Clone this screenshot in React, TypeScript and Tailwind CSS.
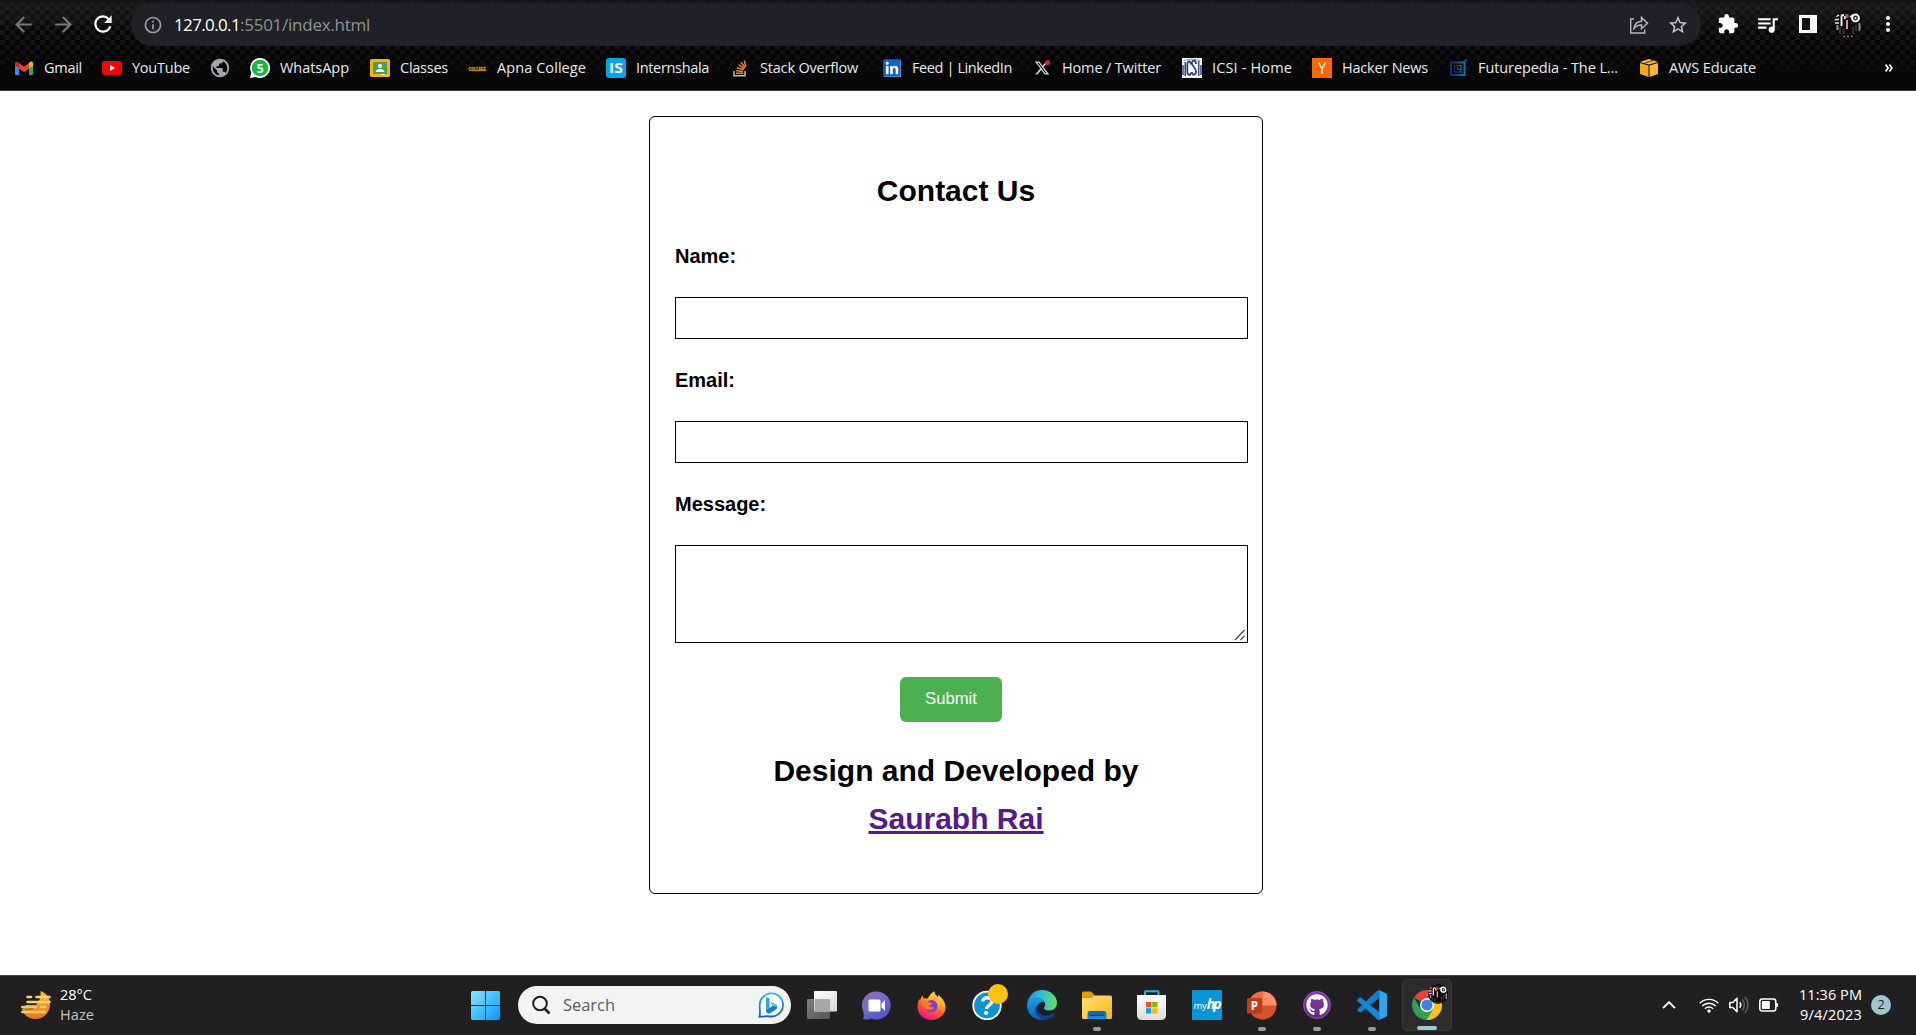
import React, { useLayoutEffect, useRef, useState } from "react";
import {
  MdArrowBack, MdArrowForward, MdRefresh, MdInfoOutline, MdStarBorder,
  MdExtension, MdQueueMusic, MdMoreVert, MdPublic,
} from "react-icons/md";
import { FaGithub, FaLinkedin } from "react-icons/fa";
import { FaXTwitter } from "react-icons/fa6";

/* A one-line label whose tracking adapts so that it fills a given width. */
function Fit({ width, className = "", children }: { width: number; className?: string; children: string }) {
  const ref = useRef<HTMLSpanElement>(null);
  const [tracking, setTracking] = useState(0);
  useLayoutEffect(() => {
    if (ref.current) {
      const natural = ref.current.getBoundingClientRect().width;
      setTracking((width - natural) / children.length);
    }
  }, [width, children]);
  return (
    <span ref={ref} className={`inline-block whitespace-pre ${className}`} style={{ letterSpacing: tracking }}>
      {children}
    </span>
  );
}

/* ---------- bookmark icons (20 x 20) ---------- */
const Gmail = () => (
  <svg viewBox="0 0 20 20" className="size-5">
    <path d="M1 4.5V16a1 1 0 0 0 1 1h3V8z" fill="#4285f4" />
    <path d="M19 4.5V16a1 1 0 0 1-1 1h-3V8z" fill="#34a853" />
    <path d="M15 5l1.2-1C17.500 3 19 3.900 19 5.500V7.500l-4 3z" fill="#fbbc04" />
    <path d="M5 10.500V5l5 3.800L15 5v5.500L10 14.200z" fill="#ea4335" />
    <path d="M1 7.500V5.500C1 3.900 2.500 3 3.800 4L5 5v5.500z" fill="#c5221f" />
  </svg>
);
const YouTube = () => (
  <svg viewBox="0 0 20 20" className="size-5">
    <rect x="0" y="3" width="20" height="14" rx="3" fill="#f00" />
    <path d="M8 7v6l5-3z" fill="#fff" />
  </svg>
);
const WhatsApp = () => (
  <svg viewBox="0 0 20 20" className="size-5">
    <path d="M10 0a10 10 0 1 1-4.500 18.900L0 20l1.300-5.200A10 10 0 0 1 10 0z" fill="#fff" />
    <circle cx="10" cy="10" r="8.300" fill="#12b940" />
    <text x="10" y="14.600" textAnchor="middle" fontSize="12.500" fontWeight="700" fontFamily="Open Sans, sans-serif" fill="#fff">5</text>
  </svg>
);
const Classes = () => (
  <svg viewBox="0 0 20 20" className="size-5">
    <rect y="1" width="20" height="18" rx="1.500" fill="#f4b400" />
    <rect x="3" y="4" width="14" height="12" fill="#4b9b5f" />
    <circle cx="10" cy="8" r="2" fill="#fff" />
    <path d="M5.500 14c0-4 9-4 9 0z" fill="#fff" />
    <path d="M11 16h4v1h-4z" fill="#fff" />
  </svg>
);
const College = () => (
  <svg viewBox="0 0 20 20" className="size-5 overflow-visible">
    <text x="1.500" y="12.800" fontSize="4.800" fontWeight="900" fontFamily="Open Sans, sans-serif" fill="#e0920f" stroke="#e0920f" strokeWidth=".3" textLength="17" lengthAdjust="spacingAndGlyphs">COLLEGE</text>
  </svg>
);
const Internshala = () => (
  <svg viewBox="0 0 20 20" className="size-5">
    <rect width="20" height="20" rx="3" fill="#00a5ec" />
    <text x="10" y="15.300" textAnchor="middle" fontSize="15" fontWeight="700" fontFamily="Open Sans, sans-serif" fill="#fff" textLength="14" lengthAdjust="spacingAndGlyphs">IS</text>
  </svg>
);
const StackOverflow = () => (
  <svg viewBox="0 0 20 20" className="size-5">
    <path d="M4 13v4.800h11V13" fill="none" stroke="#bcbbbb" strokeWidth="1.500" />
    <path d="M6 15.300h7M6.200 12.700l6.900.8M7 9.800l6.600 2M8.600 6.700l5.700 4M11 4.200l4.200 5.500M14.300 2.500l1.500 6" stroke="#f48024" strokeWidth="1.500" fill="none" />
  </svg>
);
const LinkedIn = () => (
  <div className="flex size-5 items-center justify-center">
    <div className="flex size-[17px] items-center justify-center bg-white">
      <FaLinkedin className="size-[20px] shrink-0 text-[#0a66c2]" />
    </div>
  </div>
);
const XIcon = () => (
  <div className="relative size-5 bg-black">
    <FaXTwitter className="absolute left-[2px] top-[2px] size-4 text-[#d8d8d8]" />
    <span className="absolute left-[13px] top-[2px] size-[5px] rounded-full bg-[#f01c2b]" />
  </div>
);
const Icsi = () => (
  <svg viewBox="0 0 20 20" className="size-5">
    <rect width="20" height="20" fill="#fff" />
    <path d="M1 17V7M3.200 18V4" stroke="#3c558d" strokeWidth="1.600" />
    <path d="M8.800 6.500C9 2.500 5.300 2 5.300 7v6c0 5 3.500 5 3.600 1.500" fill="none" stroke="#29437e" strokeWidth="1.800" />
    <path d="M14 6c0-4.500-4.400-4-4.200-.8.200 3 4.200 4.500 4.200 8.300s-4.200 4.500-4.200.5" fill="none" stroke="#29437e" strokeWidth="1.800" />
    <path d="M16.700 3v15M19 7v10" stroke="#3c558d" strokeWidth="1.600" />
    <path d="M2 2.500Q10-.5 18 2.500" stroke="#8594b8" fill="none" />
  </svg>
);
const Hacker = () => (
  <svg viewBox="0 0 20 20" className="size-5">
    <rect width="20" height="20" fill="#f60" />
    <path d="M6.500 4.500L10 11l3.500-6.500M10 10.500v5.500" fill="none" stroke="#fff" strokeWidth="1.500" />
  </svg>
);
const Futurepedia = () => (
  <svg viewBox="0 0 20 20" className="size-5">
    <defs>
      <linearGradient id="fp"><stop stopColor="#17296c" /><stop offset="1" stopColor="#0877b8" /></linearGradient>
    </defs>
    <path d="M3 4.500h13.500V17H3z" fill="none" stroke="url(#fp)" strokeWidth="2" />
    <path d="M6.500 7.500H13V14H6.500zM9.500 9v2.500H12" fill="none" stroke="url(#fp)" strokeWidth="1.200" />
    <path d="M15.500 4.500L18 2" stroke="#0b6ba6" strokeWidth="1.200" />
    <circle cx="18" cy="2" r="1" fill="#0b5f98" />
  </svg>
);
const Aws = () => (
  <svg viewBox="0 0 20 20" className="size-5">
    <path d="M1 4l9-3 9 3-9 2.500z" fill="#f6b83d" />
    <path d="M1 5l8.500 2.500V19L1 16z" fill="#f2a91f" />
    <path d="M19 5l-8.500 2.500V19l8.500-3z" fill="#f8b62d" />
    <path d="M5.500 5.200L14 2.500" stroke="#573b08" strokeWidth="1" />
  </svg>
);

const bookmarks: { icon: React.ReactNode; label?: string; text?: number; cell: string }[] = [
  { icon: <Gmail />, label: "Gmail", text: 38, cell: "w-[88px]" },
  { icon: <YouTube />, label: "YouTube", text: 58, cell: "w-[108px]" },
  { icon: <MdPublic className="size-[22px] shrink-0 text-[#a3a8ae]" />, cell: "w-[40px]" },
  { icon: <WhatsApp />, label: "WhatsApp", text: 69, cell: "w-[120px]" },
  { icon: <Classes />, label: "Classes", text: 48, cell: "w-[97px]" },
  { icon: <College />, label: "Apna College", text: 89, cell: "w-[139px]" },
  { icon: <Internshala />, label: "Internshala", text: 73, cell: "w-[124px]" },
  { icon: <StackOverflow />, label: "Stack Overflow", text: 98, cell: "w-[152px]" },
  { icon: <LinkedIn />, label: "Feed | LinkedIn", text: 100, cell: "w-[150px]" },
  { icon: <XIcon />, label: "Home / Twitter", text: 99, cell: "w-[150px]" },
  { icon: <Icsi />, label: "ICSI - Home", text: 80, cell: "w-[130px]" },
  { icon: <Hacker />, label: "Hacker News", text: 86, cell: "w-[136px]" },
  { icon: <Futurepedia />, label: "Futurepedia - The L...", text: 140, cell: "w-[191px]" },
  { icon: <Aws />, label: "AWS Educate", text: 87, cell: "w-[130px]" },
];

const Avatar = ({ className }: { className: string }) => (
  <svg viewBox="0 0 28 28" className={className}>
    <defs><clipPath id="av"><circle cx="14" cy="14" r="14" /></clipPath></defs>
    <g clipPath="url(#av)">
      <rect width="28" height="28" fill="#0e0c0e" />
      <path d="M0 9.500h5M1 13h4M2 6.500l3-1.500" stroke="#e2e2e2" strokeWidth="1.700" />
      <path d="M7.500 16V6.500q0-1.500 2.500-1.500M11 6v3M16 7l3-2" fill="none" stroke="#f0f0f0" strokeWidth="1.900" />
      <path d="M13 4v4" stroke="#b5543f" strokeWidth="3" />
      <path d="M13 10v9" stroke="#d9b3a6" strokeWidth="1.800" />
      <path d="M6 17v7M9.500 19v5M19 17v7M22 15v6" stroke="#40323c" strokeWidth="1.800" />
      <path d="M25.500 13v8M3.500 15v5" stroke="#8896aa" strokeWidth="2" />
      <path d="M9 26.500h10" stroke="#9b7069" strokeWidth="1.500" strokeDasharray="2 2" />
      <circle cx="21.500" cy="8" r="3.400" fill="#222" stroke="#fff" strokeWidth="2" />
      <circle cx="21.500" cy="8" r="1" fill="#fff" />
    </g>
  </svg>
);

function BrowserChrome() {
  return (
    <header className="h-[91px] border-b border-[#3a3838] bg-[#070707] bg-[linear-gradient(to_bottom,rgba(20,20,20,0.9)_0px,rgba(34,34,34,0.7)_5px,rgba(16,16,16,0.35)_30px,rgba(4,4,4,0.4)_50px,#070707_80px),conic-gradient(#030303_25%,#1a1a1a_0_50%,#030303_0_75%,#1a1a1a_0)] bg-[length:100%_100%,10px_10px]">
      <div className="flex h-[46px] items-center pt-[2px]">
        <MdArrowBack className="ml-[11px] size-[25px] text-[#77797b]" />
        <MdArrowForward className="ml-[15px] size-[25px] text-[#77797b]" />
        <MdRefresh className="ml-[14px] size-[26px] text-white" />
        <div className="ml-[15px] mt-px flex h-[43px] w-[1570px] items-center rounded-full bg-[#202124]">
          <MdInfoOutline className="ml-[12px] size-5 text-[#9aa0a6]" />
          <div className="ml-[11px] flex text-[17px] leading-6 text-white">
            <Fit width={66}>127.0.0.1</Fit>
            <Fit width={130} className="text-[#8f9296]">:5501/index.html</Fit>
          </div>
          <svg viewBox="0 0 20 20" className="ml-auto size-5" fill="none" stroke="#b6b8bb" strokeWidth="1.400">
            <path d="M5 4H1.700v14h14v-3.500" />
            <path d="M5 13.500C5.500 9 8 6.700 12.500 6.300V2.500l6 5.700-6 5.500V10C9 9.800 7 11 5 13.500z" />
          </svg>
          <MdStarBorder className="ml-[18px] mr-[12px] size-[22px] text-[#c8c9cb]" />
        </div>
        <MdExtension className="ml-[16px] size-[22px] text-white" />
        <MdQueueMusic className="ml-[16px] size-[25px] text-white" />
        <div className="ml-[19px] h-[18px] w-[18px] border-[3px] border-r-[7px] border-white" />
        <Avatar className="ml-[17px] size-[28px]" />
        <MdMoreVert className="ml-[14px] size-[24px] text-white" />
      </div>
      <nav className="flex h-[44px] items-center pl-[14px]">
        {bookmarks.map((b, i) => (
          <div key={i} className={`flex shrink-0 items-center ${b.cell}`}>
            <div className="mr-[10px] flex size-5 shrink-0 items-center justify-center">{b.icon}</div>
            {b.label && <Fit width={b.text!} className="text-[14.5px] leading-5 text-[#e8eaed]">{b.label}</Fit>}
          </div>
        ))}
        <svg viewBox="0 0 8 8" className="mb-px ml-auto mr-[23px] size-2" fill="none" stroke="#fff" strokeWidth="1.700">
          <path d="M.6.6L3.200 4 .6 7.400M4.400.6L7 4 4.400 7.400" />
        </svg>
      </nav>
    </header>
  );
}

function ContactPage() {
  const field = "mt-[25px] block w-[573px] border border-black bg-white px-3 outline-none";
  return (
    <main className="h-[884px] bg-white pt-[25px] font-['Liberation_Sans',Arial,sans-serif] text-black">
      <form className="ml-[649px] h-[778px] w-[614px] rounded-[6px] border border-black pl-[25px]" onSubmit={(e) => e.preventDefault()}>
        <h2 className="mr-[25px] pt-[50px] text-center text-[30px] font-bold leading-[48px]">Contact Us</h2>
        <label htmlFor="name" className="mt-[25px] block h-[32px] text-[20px] font-bold leading-[32px]">Name:</label>
        <input id="name" className={`${field} h-[42px]`} />
        <label htmlFor="email" className="mt-[25px] block h-[32px] text-[20px] font-bold leading-[32px]">Email:</label>
        <input id="email" className={`${field} h-[42px]`} />
        <label htmlFor="message" className="mt-[25px] block h-[32px] text-[20px] font-bold leading-[32px]">Message:</label>
        <div className="relative w-[573px]">
          <textarea id="message" className={`${field} h-[98px] resize-none`} />
          <svg viewBox="0 0 12 12" className="pointer-events-none absolute bottom-[2px] right-[2px] size-3" fill="none" stroke="#4a4a4a" strokeWidth="1.300">
            <path d="M1 11L10.500 1M6.500 11l4-4.200" />
          </svg>
        </div>
        <button className="ml-[225px] mt-[34px] block h-[45px] w-[102px] rounded-[6px] bg-[#4caf50] pb-px text-[16.67px] leading-5 text-white">Submit</button>
        <h2 className="mr-[25px] mt-[25px] text-center text-[30px] font-bold leading-[48px]">
          Design and Developed by
          <br />
          <a className="text-[#551a8b] underline" href="#">Saurabh Rai</a>
        </h2>
      </form>
    </main>
  );
}

/* ---------- taskbar icons ---------- */
const Haze = () => (
  <svg viewBox="0 0 30 28" className="h-[28px] w-[30px]">
    <defs><linearGradient id="hz" x2="0" y2="1"><stop stopColor="#f5bd3c" /><stop offset="1" stopColor="#ef7613" /></linearGradient></defs>
    <path d="M19.500 0c7 2.500 10 8 9.400 14.500C28.300 22.500 22 28 14.500 28 8 28 3 24.500 1 18.500L5 14h10C19 10 20 5 19.500 0z" fill="url(#hz)" />
    <path d="M6.500 6h3.500M15.500 6h13M6.500 11h22" stroke="#f9d45f" strokeWidth="2.600" strokeLinecap="round" />
    <path d="M1.300 16h13.500M20 16h4M1.300 21h22.500" stroke="#efc76d" strokeWidth="2.600" strokeLinecap="round" />
    <path d="M4 18.300q6 .3 8-.9" stroke="#7a5a22" strokeWidth=".9" fill="none" />
  </svg>
);
const Windows = () => (
  <svg viewBox="0 0 29 29" className="size-[29px]">
    <defs><linearGradient id="wn" x2="1" y2="1"><stop stopColor="#8be3ff" /><stop offset=".5" stopColor="#42c3fb" /><stop offset="1" stopColor="#0892fb" /></linearGradient></defs>
    <path d="M1 0h13v14H0V1zM15 0h13l1 1v13H15zM0 15h14v14H1l-1-1zM15 15h14v13l-1 1H15z" fill="url(#wn)" />
  </svg>
);
const Bing = () => (
  <svg viewBox="0 0 26 26" className="size-[26px]">
    <defs><linearGradient id="bg" x2="0" y2="1"><stop stopColor="#32b8e9" /><stop offset="1" stopColor="#1c58c7" /></linearGradient></defs>
    <path d="M13.300 1.300a11.600 11.600 0 1 1-2 23c-2.300-.5-3.300 0-9.800.5 1-3 .1-7.500.2-11.500A11.800 11.800 0 0 1 13.300 1.300z" fill="#fafdff" stroke="url(#bg)" strokeWidth="1.800" />
    <path d="M8 5l3.500 1.500V17l-3.500 2z" fill="#28a8ea" />
    <path d="M8 18.500l3.500-2.500 3-2-1.600-3.800 5 2.200c2 1 1.500 4.300-.4 5.300l-5.500 3.500c-1.700 1-4-.2-4-2.700z" fill="#1f73db" />
    <path d="M12.900 10.200l5 2.200c1 .5 1.300 1.600 1.200 2.600l-4.600-1z" fill="#41d5df" />
  </svg>
);
const TaskView = () => (
  <svg viewBox="0 0 30 28" className="h-[28px] w-[30px]">
    <defs>
      <linearGradient id="tv" x2="1" y2="1"><stop stopColor="#fff" /><stop offset="1" stopColor="#d6d6d6" /></linearGradient>
      <linearGradient id="tw" x2="1" y2="1"><stop stopColor="#7e7e7e" /><stop offset="1" stopColor="#555" /></linearGradient>
    </defs>
    <rect y="8" width="23" height="20" rx="1" fill="url(#tw)" />
    <rect x="7" width="23" height="20.500" rx="1" fill="url(#tv)" />
    <path d="M7.500 8H22q1 0 1 1v11H7.500z" fill="#a9a9a9" />
  </svg>
);
const Chat = () => (
  <svg viewBox="0 0 29 29" className="size-[29px]">
    <defs><linearGradient id="ct" x1="0" y1="0" x2=".7" y2="1"><stop stopColor="#9c6b9c" /><stop offset=".45" stopColor="#6f70cf" /><stop offset="1" stopColor="#5254c4" /></linearGradient></defs>
    <path d="M15 .5a14 14 0 1 1-5.500 27C6 29 2.500 28.500.8 28c1.500-2 .8-5 .5-7.500A14 14 0 0 1 15 .5z" fill="url(#ct)" />
    <rect x="6.500" y="8.500" width="12" height="12" rx="1.500" fill="#fff" />
    <path d="M19.500 12.500L23 9.300v10.400l-3.500-3.200z" fill="#fff" />
  </svg>
);
const Firefox = () => (
  <svg viewBox="0 0 29 29" className="size-[29px]">
    <defs>
      <linearGradient id="ff" x1=".8" y1="0" x2=".3" y2="1"><stop stopColor="#fff44f" /><stop offset=".35" stopColor="#ffae25" /><stop offset=".65" stopColor="#ff5036" /><stop offset="1" stopColor="#e31587" /></linearGradient>
    </defs>
    <path d="M17.300.2c.2 3 2 4 3.800 6 .2-1 0-1.500-.2-2.200 4.600 2.700 7.600 7.500 7.600 12.500C28.500 23.500 22 29 14.500 29 6.500 29 .5 23 .5 15.500c0-3.500 1-6 2.200-7.500l.2 1.800c.5-2.300 1.500-4 3-5.300l.5 3c2-.7 3-.2 4 .1C12 5.500 14 1.500 17.300.2z" fill="url(#ff)" />
    <circle cx="14.500" cy="15" r="6" fill="#8139de" />
    <path d="M5 9.500c3-1.600 5.800 0 6.800 1.800 1 .6 3 .2 3.600.8-.4 1.800-2.600 2.200-3.800 3.200 1.500 1 4 .5 5.500 1.500-3 3.500-8 2-9.500-.5L4 14z" fill="#ff7a22" />
    <path d="M15 7.500c4 .5 7 4 6 8.500 3-3 2-8-2-10z" fill="#ffb62b" />
  </svg>
);
const HpHelp = () => (
  <div className="relative size-[30px]">
    <svg viewBox="0 0 30 30" className="size-[30px]">
      <circle cx="15" cy="15.500" r="13.800" fill="#0b94d6" stroke="#fff" strokeWidth="1.800" />
      <path d="M10.500 11.500c.5-5.200 10-5 9.500.2-.4 3.500-5.300 3.500-5.600 7.300" fill="none" stroke="#fff" strokeWidth="3.400" />
      <circle cx="14" cy="23" r="2.100" fill="#fff" />
    </svg>
    <span className="absolute -top-[6px] left-[16px] size-5 rounded-full bg-[#ffc20e]" />
  </div>
);
const Edge = () => (
  <svg viewBox="0 0 30 30" className="size-[30px]">
    <defs>
      <linearGradient id="e1" x2="1"><stop stopColor="#1b96e0" /><stop offset=".5" stopColor="#32c2d5" /><stop offset="1" stopColor="#63e04b" /></linearGradient>
      <linearGradient id="e2" x2="0" y2="1"><stop stopColor="#1aa0e2" /><stop offset="1" stopColor="#0b5fb8" /></linearGradient>
    </defs>
    <path d="M.3 13C2 4.500 8 0 15 0c8.500 0 15 6 15 13 0 4.500-3.500 7.500-7.500 7.500-3 0-5.500-1-5.500-2.300 0-1 1.200-1.500 1.200-3.700 0-3.500-3.500-6.500-8-6.500C5.500 8 2 10 .3 13z" fill="url(#e1)" />
    <path d="M0 15c0-4.500 4.500-7.500 9-7.500 4 0 7.500 1.500 8.800 4.800C15 10.500 10 13.500 10 19c0 5.500 3.500 9.500 8 10.500C8 31.500 0 24.500 0 15z" fill="url(#e2)" />
    <path d="M10.800 14.500C8 22 15 27 21 25.500c3-.7 5-2 6-2.500.8-.3 1 .5.700 1C26 27 22 29.600 17.500 29.800 12 29 8 24 8.300 19.500c.1-2 1-3.800 2.500-5z" fill="#123f86" />
  </svg>
);
const Explorer = () => (
  <svg viewBox="0 0 30 28" className="h-[28px] w-[30px]">
    <defs>
      <linearGradient id="x1" x2="1" y2="1"><stop stopColor="#ffe07a" /><stop offset="1" stopColor="#fbb71b" /></linearGradient>
      <linearGradient id="x2" x2="0" y2="1"><stop stopColor="#0c62bd" /><stop offset="1" stopColor="#1f8ee0" /></linearGradient>
    </defs>
    <path d="M0 2q0-1.500 1.500-1.500H9L13 4.500V10H0z" fill="#dda006" />
    <path d="M0 7h9.500L13 4.500h15.500Q30 4.500 30 6v20.500q0 1.500-1.500 1.500h-27Q0 28 0 26.500z" fill="url(#x1)" />
    <path d="M5.500 28v-5q0-3 3-3h13q3 0 3 3v5z" fill="url(#x2)" />
    <path d="M8.500 24.200h13" stroke="#0b4384" strokeWidth="1.500" strokeLinecap="round" />
  </svg>
);
const Store = () => (
  <svg viewBox="0 0 29 30" className="h-[30px] w-[29px]">
    <defs><linearGradient id="st" x2="0" y2="1"><stop stopColor="#fff" /><stop offset="1" stopColor="#dcdcdc" /></linearGradient></defs>
    <path d="M8 6V2q0-.7.700-.7h12q.8 0 .8.700v4" fill="none" stroke="#22b3ec" strokeWidth="2" />
    <path d="M0 5h29v20q0 5-5 5H5q-5 0-5-5z" fill="url(#st)" />
    <path d="M9 12h5.300v5.300H9z" fill="#f25022" /><path d="M15.200 12h5.300v5.300h-5.300z" fill="#7fba00" />
    <path d="M9 18.200h5.300v5.300H9z" fill="#00a4ef" /><path d="M15.200 18.200h5.300v5.300h-5.300z" fill="#ffb900" />
  </svg>
);
const MyHp = () => (
  <div className="flex size-[30px] items-baseline justify-center rounded-[1px] bg-[#0795d5] pt-[7px] font-['Open_Sans',sans-serif] leading-none text-white">
    <span className="text-[9.5px] tracking-[-0.2px]">my</span>
    <span className="text-[14px] font-bold italic tracking-[-2px]">hp</span>
  </div>
);
const PowerPoint = () => (
  <svg viewBox="0 0 30 29" className="h-[29px] w-[30px]">
    <circle cx="15.500" cy="14.500" r="14" fill="#d35230" />
    <path d="M15.500.5a14 14 0 0 1 14 14h-14z" fill="#ff8f6b" />
    <path d="M15.500.5v14H1.500a14 14 0 0 1 14-14z" fill="#ed6c47" />
    <rect x="0" y="7" width="15" height="15.500" rx="1.300" fill="#c13b1b" />
    <text x="7.300" y="18.700" textAnchor="middle" fontSize="11.500" fontWeight="700" fontFamily="Open Sans, sans-serif" fill="#fff">P</text>
  </svg>
);
const GitHubApp = () => (
  <div className="flex size-[28px] items-center justify-center rounded-full border border-[#a24cc0] bg-linear-to-b from-[#8e35ae] to-[#5c2d83]">
    <FaGithub className="size-[22px] text-white" />
  </div>
);
const VsCode = () => (
  <svg viewBox="0 0 30 30" className="size-[30px]">
    <path d="M22 0v8.300L4 22.300q-.8.600-1.500 0L.6 20.500q-.8-.8 0-1.600L20.500.6q.6-.6 1.500-.6z" fill="#0f7fcb" />
    <path d="M22 30v-8.300L4 7.700q-.8-.6-1.500 0L.6 9.500q-.8.800 0 1.600l19.900 18.300q.6.600 1.500.6z" fill="#1486d3" />
    <path d="M20.500.6q.8-.8 1.800-.4L29 3.300q1 .5 1 1.700v20q0 1.200-1 1.700l-6.700 3.100q-1 .4-1.800-.4 1.700 1 1.700-1V1.600q0-2-1.700-1z" fill="#2fa4f1" />
  </svg>
);
const ChromeIcon = () => (
  <svg viewBox="0 0 30 30" className="size-[30px]">
    <path d="M15 15L2.010 7.500a15 15 0 0 1 25.980 0z" fill="#ea4335" />
    <path d="M15 15L27.990 7.500A15 15 0 0 1 15 30z" fill="#fbc116" />
    <path d="M2.010 7.500A15 15 0 0 0 15 30l6.500-11.250H8.500z" fill="#31a350" />
    <path d="M15 8.250h13.400A15 15 0 0 1 15 30l6.500-11.250z" fill="#fbc116" />
    <circle cx="15" cy="15" r="7" fill="#fff" />
    <circle cx="15" cy="15" r="5.600" fill="#3b82ee" />
  </svg>
);

const apps: { icon: React.ReactNode; open?: boolean }[] = [
  { icon: <TaskView /> }, { icon: <Chat /> }, { icon: <Firefox /> }, { icon: <HpHelp /> },
  { icon: <Edge /> }, { icon: <Explorer />, open: true }, { icon: <Store /> }, { icon: <MyHp /> },
  { icon: <PowerPoint />, open: true }, { icon: <GitHubApp />, open: true }, { icon: <VsCode />, open: true },
];

function Taskbar() {
  return (
    <footer className="flex h-[60px] items-center border-t border-[#464846] bg-[#202020] pb-px text-[14.5px] leading-5 text-white">
      <div className="flex w-[471px] items-center pl-[21px]">
        <Haze />
        <div className="ml-[9px] flex flex-col items-start pb-px">
          <Fit width={32}>28°C</Fit>
          <Fit width={34} className="text-[#c5c5c5]">Haze</Fit>
        </div>
      </div>
      <Windows />
      <div className="ml-[18px] flex h-[38px] w-[273px] items-center rounded-full bg-[#f3f3f3]">
        <svg viewBox="0 0 20 20" className="ml-[13px] size-5" fill="none" stroke="#1d1d1d" strokeWidth="2">
          <circle cx="9" cy="8.500" r="6.800" /><path d="M13.500 13.500l5 5" strokeWidth="2.600" />
        </svg>
        <Fit width={52} className="ml-[12px] text-[16.5px] text-[#5d5d5d]">Search</Fit>
        <div className="ml-auto mr-[7px]"><Bing /></div>
      </div>
      <div className="ml-[3px] flex">
        {apps.map((a, i) => (
          <div key={i} className="relative flex h-[52px] w-[55px] items-center justify-center">
            {a.icon}
            {a.open && <span className="absolute bottom-0 left-[24px] h-1 w-2 rounded-full bg-[#9a9a9a]" />}
          </div>
        ))}
        <div className="relative ml-[3px] flex h-[52px] w-[50px] items-center justify-center rounded-[5px] border border-[#383838] bg-[#2c2c2c]">
          <ChromeIcon />
          <Avatar className="absolute left-[25px] top-[4px] size-5" />
          <span className="absolute bottom-0 left-[14px] h-1 w-5 rounded-full bg-[#9cc7d1]" />
        </div>
      </div>
      <div className="ml-auto flex items-center">
        <svg viewBox="0 0 14 8" className="h-2 w-[14px]" fill="none" stroke="#fff" strokeWidth="1.900"><path d="M1 7.200l6-6 6 6" /></svg>
        <svg viewBox="0 0 20 16" className="ml-[23px] h-4 w-5" fill="none" stroke="#fff" strokeWidth="1.400">
          <path d="M.7 6.200a13.200 13.200 0 0 1 18.600 0M3.200 9a9.700 9.700 0 0 1 13.600 0M5.900 11.700a5.900 5.900 0 0 1 8.200 0" />
          <circle cx="10" cy="14" r="1.700" fill="#fff" stroke="none" />
        </svg>
        <svg viewBox="0 0 21 18" className="ml-[10px] h-[18px] w-[21px]" fill="none" stroke="#fff" strokeWidth="1.500">
          <path d="M.8 6.500h3L8 2.300v13.400l-4.200-4.200h-3z" strokeLinejoin="round" /><path d="M10.800 6.200q2 2.800 0 5.600" />
          <path d="M13.300 3.500q4 5.500 0 11M16 1q6 8 0 16" stroke="#606060" />
        </svg>
        <svg viewBox="0 0 20 14" className="ml-[9px] h-[14px] w-5">
          <rect x=".8" y="1" width="16" height="12" rx="2.500" fill="none" stroke="#fff" strokeWidth="1.500" />
          <rect x="2.800" y="3" width="8" height="8" rx=".8" fill="#fff" /><path d="M17 5h1.500q1.500 2 0 4H17z" fill="#fff" />
        </svg>
        <div className="ml-[19px] flex w-[64px] flex-col items-end pb-px">
          <Fit width={63}>11:36 PM</Fit>
          <Fit width={62}>9/4/2023</Fit>
        </div>
        <div className="ml-[9px] mr-[25px] flex size-5 items-center justify-center rounded-full bg-[#9cc7d1] text-[12.5px] text-[#1b1b1b]">2</div>
      </div>
    </footer>
  );
}

export default function App() {
  return (
    <div className="flex h-[1035px] w-[1916px] flex-col overflow-hidden font-['Open_Sans','Noto_Sans',sans-serif]">
      <BrowserChrome />
      <ContactPage />
      <Taskbar />
    </div>
  );
}
